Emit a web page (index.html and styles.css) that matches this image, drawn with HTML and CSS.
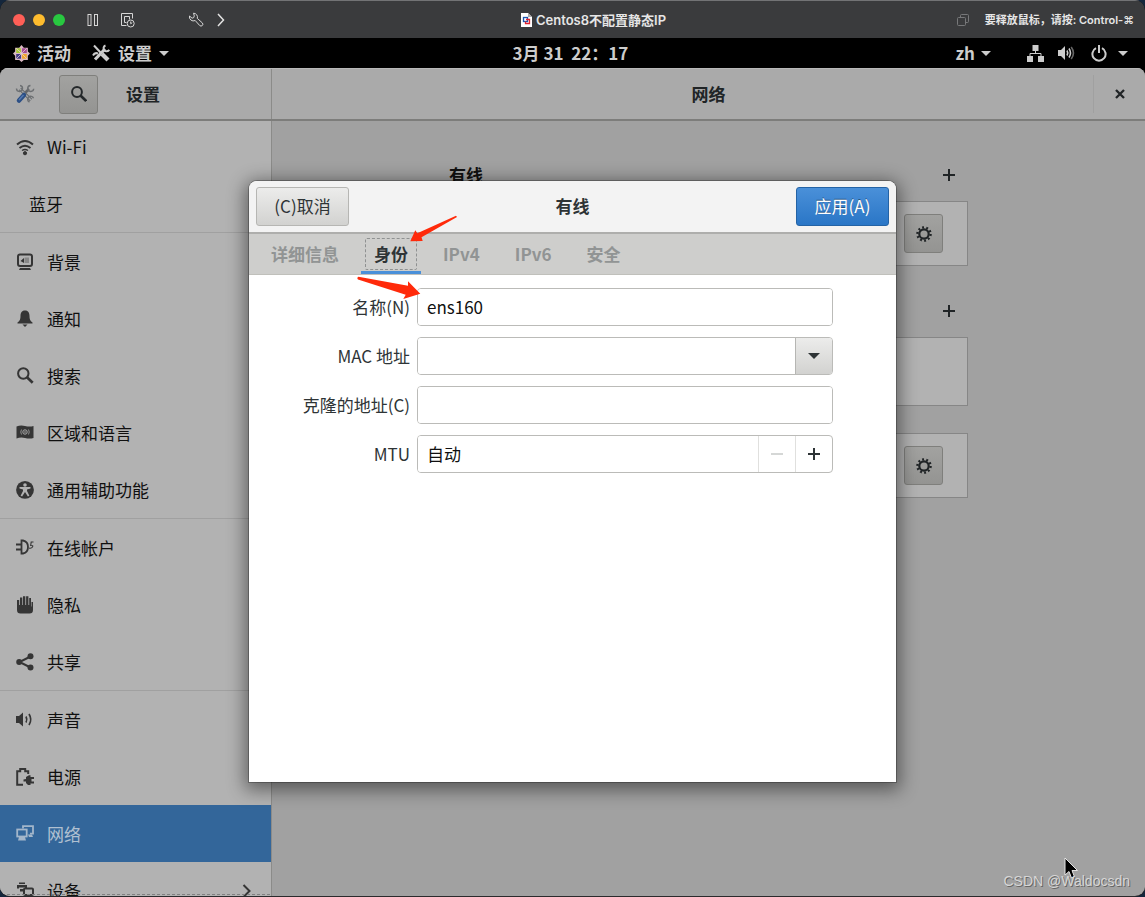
FILE: index.html
```html
<!DOCTYPE html>
<html lang="zh-CN">
<head>
<meta charset="utf-8">
<title>Centos8不配置静态IP</title>
<link rel="stylesheet" href="styles.css">
</head>
<body>
<div class="vm">
  <header class="titlebar">
    <div class="titlebar-left">
      <span class="light light-red"></span>
      <span class="light light-yellow"></span>
      <span class="light light-green"></span>
      <svg class="tb-pause" width="12" height="14" viewBox="0 0 12 14" fill="none" stroke="#d6d6d6"><rect x="1" y="1.500" width="3" height="11"/><rect x="7.500" y="1.500" width="3" height="11"/></svg>
      <svg class="tb-snap" width="16" height="16" viewBox="0 0 16 16" fill="none" stroke="#d6d6d6"><path d="M6.500 13.500h-5v-12h11v5M6.500 10.500h-2v-6h5v3"/><circle cx="10.700" cy="11.500" r="3.500"/><path d="M10.700 9.500v2.200l1.500-1"/></svg>
      <svg class="tb-wrench" width="16" height="16" viewBox="0 0 16 16" fill="none" stroke="#d6d6d6" stroke-linejoin="round"><path d="M5.500 1.200a4 4 0 0 1 3.800 5.200l5 4.500a1.800 1.800 0 0 1-2.600 2.600L7.200 8.500A4 4 0 0 1 1.500 4l2.600 2.200 1.600-.6.600-1.700z"/></svg>
      <svg class="tb-next" width="8" height="14" viewBox="0 0 8 14" fill="none" stroke="#e2e2e2" stroke-width="1.500"><path d="M1 1l5.500 6L1 13"/></svg>
    </div>
    <div class="titlebar-title">
      <svg width="11" height="14" viewBox="0 0 11 14"><path d="M0 0h7l4 4v10H0z" fill="#fff"/><path d="M7 0v4h4z" fill="#aaa"/><rect x="2.500" y="4.500" width="4" height="4" fill="none" stroke="#1d56b0" stroke-width="1.300"/><path d="M5 6.500h3.500v4h-4V8.500" fill="none" stroke="#e3222f" stroke-width="1.300"/></svg>
      <span>Centos8不配置静态IP</span>
    </div>
    <div class="titlebar-right">
      <svg width="12" height="12" viewBox="0 0 12 12" fill="none" stroke="#77787a"><path d="M3.500 3V1.500a1 1 0 0 1 1-1h6a1 1 0 0 1 1 1v6a1 1 0 0 1-1 1H9"/><rect x=".5" y="3.500" width="8" height="8" rx="1"/></svg>
      <span>要释放鼠标，请按: Control-⌘</span>
    </div>
  </header>

  <nav class="topbar">
    <div class="topbar-left">
      <div class="topbar-group">
        <svg width="17" height="17" viewBox="0 0 16 16"><path d="M8 0l2.200 2.500H14V6l2 2-2 2.200V14h-3.800L8 16l-2.200-2H2v-3.800L0 8l2-2V2.500h3.800z" fill="#d9b9c3"/><path d="M3 3h4.500v4.500H3z" fill="#a8c93a"/><path d="M8.500 3H13v4.500H8.500z" fill="#a54c94"/><path d="M3 8.500h4.500V13H3z" fill="#453c86"/><path d="M8.500 8.500H13V13H8.500z" fill="#efa72c"/><path d="M3 3l10 10M13 3L3 13" stroke="#e8d8dc" stroke-width=".7"/></svg>
        <span>活动</span>
      </div>
      <div class="topbar-group topbar-app">
        <svg width="19" height="18" viewBox="0 0 19 18" fill="none" stroke="#ccc"><path d="M2 1.500l7 7.500" stroke-width="2"/><path d="M10 10l6 6" stroke-width="4.200"/><path d="M13 5L3 15.500" stroke-width="3.200"/><path d="M13.500 1.500a3 3 0 1 0 3.700 4.200M6 9.500a4 4 0 0 0-5 2" stroke-width="2"/></svg>
        <span>设置</span>
        <span class="tri"></span>
      </div>
    </div>
    <time class="clock">3月 31&nbsp; 22：17</time>
    <div class="topbar-group topbar-status">
      <span>zh</span><span class="tri"></span>
      <svg class="st-net" width="17" height="17" viewBox="0 0 17 17" fill="#ccc"><path d="M5.500 0h6v6h-6zM0 11h6v6H0zM11 11h6v6h-6z"/><path d="M8.500 6v3M3 11V8.500h11V11" fill="none" stroke="#ccc"/></svg>
      <svg class="st-vol" width="17" height="16" viewBox="0 0 17 16" fill="none" stroke="#ccc" stroke-width="1.600"><path d="M0 5h3l4-4v14l-4-4H0z" fill="#ccc" stroke="none"/><path d="M9 5.500q1.500 2.500 0 5M11 3.500q3 4.500 0 9"/><path d="M13.200 2q4.500 6 0 12" stroke="#666"/></svg>
      <svg class="st-power" width="16" height="17" viewBox="0 0 16 17" fill="none" stroke="#ccc" stroke-width="2"><path d="M5 3.200a6.600 6.600 0 1 0 6 0M8 0v8"/></svg>
      <span class="tri"></span>
    </div>
  </nav>

  <div class="desktop">
    <div class="window">
      <header class="headerbar">
        <div class="hb-side">
          <svg class="hb-tools" width="20" height="20" viewBox="0 0 20 20" fill="none"><path d="M14 5L8 11" stroke="#63666a" stroke-width="2.500"/><path d="M5 5l11 11" stroke="#65686b" stroke-width="3.200"/><path d="M5 5l11 11" stroke="#a4a6a8" stroke-width="1.400"/><path d="M15.500 1.500a3 3 0 1 0 3.200 3.300M1.500 4.500A3 3 0 1 0 5 1.500M14.500 18a3 3 0 1 1 4-3.700" stroke="#6c6f72" stroke-width="1.400"/><path d="M9 11l-5 5.500" stroke="#2c4f85" stroke-width="4.500" stroke-linecap="round"/><path d="M8.500 11l-4.500 5" stroke="#5479b0" stroke-width="1.500"/></svg>
          <button class="btn-dim hb-search" type="button" aria-label="搜索"><svg width="16" height="16" viewBox="0 0 16 16" fill="none" stroke="#24282a" stroke-width="2"><circle cx="6" cy="6" r="4.900"/><path d="M9.500 9.500l5.700 5.500" stroke-width="2.700"/></svg></button>
          <h1 class="hb-title">设置</h1>
        </div>
        <div class="hb-main">
          <h2 class="hb-title">网络</h2>
          <button class="hb-close" type="button" aria-label="关闭"><svg width="10" height="10" viewBox="0 0 10 10" stroke="#202426" stroke-width="2.300"><path d="M1 1l8 8M9 1L1 9"/></svg></button>
        </div>
      </header>

      <div class="panes">
        <aside class="sidebar">
          <ul class="list">
            <li><a class="row" href="#"><svg class="ico" viewBox="0 0 18 18" fill="none" stroke="#353535" stroke-width="2"><path d="M1 6.500q8-7 16 0M3.500 10q5.500-4.500 11 0"/><path d="M6 12.500q3-2 6 0" stroke-width="1.300"/><circle cx="9" cy="15.200" r="1.600" fill="#353535" stroke-width="1"/></svg><span>Wi-Fi</span></a></li>
            <li><a class="row row-noicon" href="#"><span>蓝牙</span></a></li>
            <li class="sep"><a class="row" href="#"><svg class="ico" viewBox="0 0 18 18"><rect x="2" y="1.500" width="14" height="11.500" rx="2" fill="none" stroke="#353535" stroke-width="2"/><path d="M4.500 8L8 5v5zM4 15h10l1 2H3z" fill="#353535"/><path d="M8.500 4.500H13V10H8.500z" fill="#888"/></svg><span>背景</span></a></li>
            <li><a class="row" href="#"><svg class="ico" viewBox="0 0 18 18" fill="#353535"><path d="M9 .5c3.500 0 4.500 2.500 4.500 5.500s.5 5 3 6.500v1h-15v-1c2.500-1.500 3-3.500 3-6.500S5.500.5 9 .5z"/><path d="M6.500 14.500h5L9 17z"/></svg><span>通知</span></a></li>
            <li><a class="row" href="#"><svg class="ico" viewBox="0 0 18 18" fill="none" stroke="#353535" stroke-width="2"><circle cx="7.300" cy="6.500" r="5.200"/><path d="M11 10.200l5.700 5.600" stroke-width="2.600"/></svg><span>搜索</span></a></li>
            <li><a class="row" href="#"><svg class="ico" viewBox="0 0 18 18"><path d="M.5 2.500q4-1.500 8.500-.5t8.500 0v12q-4 1-8.500 0t-8.500.5z" fill="#353535"/><circle cx="9" cy="8" r="2.200" fill="none" stroke="#aaa"/><circle cx="9" cy="8" r=".8" fill="#aaa"/><path d="M5.500 5.500q-1.500 2.500 0 5M12.500 5.500q1.500 2.500 0 5" fill="none" stroke="#999" stroke-width=".9"/></svg><span>区域和语言</span></a></li>
            <li><a class="row" href="#"><svg class="ico" viewBox="0 0 18 18"><circle cx="9" cy="8.900" r="8.900" fill="#353535"/><circle cx="9" cy="4" r="1.800" fill="#b2b2b2"/><path d="M3.500 6h11v1.400L11 8.500V10l2.400 4.700-1.500.7L9 10.900l-2.900 4.500-1.500-.7L7 10V8.500L3.500 7.400z" fill="#b2b2b2"/></svg><span>通用辅助功能</span></a></li>
            <li class="sep"><a class="row" href="#"><svg class="ico" viewBox="0 0 18 18" fill="none" stroke="#353535" stroke-width="1.800"><path d="M5.500 1.500H7q5 1 5 6.500t-5 6.500H5.500zM0 5.500h5M0 10.500h5"/><path d="M17.500 3h-2.300l-.5 3.500q3-.2 1.800 1.500T13 9" stroke-width="1.100"/></svg><span>在线帐户</span></a></li>
            <li><a class="row" href="#"><svg class="ico" viewBox="0 0 18 18" fill="#353535"><path d="M1 4h2.200v5H4V1.500h2.300V9H7V.2h2.300V9h.8V.2h2.300V9h.8V2h1.800v8.500h.5V6H17v8q0 3.500-3.500 3.500h-9Q1 17.500 1 14z"/></svg><span>隐私</span></a></li>
            <li><a class="row" href="#"><svg class="ico" viewBox="0 0 18 18" fill="#353535"><path d="M14.500 3.500L3.500 9l11 5.500" fill="none" stroke="#353535" stroke-width="2"/><circle cx="14.500" cy="3.200" r="3"/><circle cx="3.200" cy="9" r="3"/><circle cx="14.500" cy="14.600" r="3"/></svg><span>共享</span></a></li>
            <li class="sep"><a class="row" href="#"><svg class="ico" viewBox="0 0 18 18" fill="none" stroke="#353535" stroke-width="1.700"><path d="M0 5h3l4-3.500v14L3 12H0z" fill="#353535" stroke="none"/><path d="M10 5.500q1.600 3 0 6M13 3q3.500 5.500 0 11"/></svg><span>声音</span></a></li>
            <li><a class="row" href="#"><svg class="ico" viewBox="0 0 18 18"><path d="M7 16.800H1.200V3.200h3V1h5v2.200h3V6" fill="none" stroke="#353535" stroke-width="2"/><path d="M7.500 11.500L10 11V9l3-1.800h1.500V9H18v2h-2.500v2.500H18v2h-3.500V17H12l-2-2v-1.500H7.500z" fill="#353535"/></svg><span>电源</span></a></li>
            <li><a class="row row-active" href="#" aria-current="page"><svg class="ico" viewBox="0 0 18 18" fill="none" stroke="#a3b6ca" stroke-width="1.800"><path d="M7 3.500V1.200h10v7.500h-3"/><rect x="1.200" y="4.500" width="9.500" height="7"/><path d="M3 12h6l1 3.500H2zM12 9.500h4l1 2.500h-4z" fill="#a3b6ca" stroke="none"/></svg><span>网络</span></a></li>
            <li><a class="row" href="#"><svg class="ico" viewBox="0 0 18 18" fill="#353535"><path d="M3 .5h6V2H3zM1 3h10v3.500H9V5.500H3v1H1zM4 7h4v2.500H4z"/><rect x="8" y="6.500" width="9" height="6.500" rx="1" fill="none" stroke="#353535" stroke-width="2"/></svg><span>设备</span><svg class="chev" width="9" height="14" viewBox="0 0 9 14" fill="none" stroke="#353535" stroke-width="2"><path d="M1.500 1l6 6-6 6"/></svg></a></li>
          </ul>
        </aside>

        <main class="content">
          <div class="sections">
            <div class="sec-head"><h3>有线</h3><button class="plain" type="button" aria-label="添加"><svg width="12" height="12" viewBox="0 0 12 12" stroke="#202426" stroke-width="2"><path d="M6 0v12M0 6h12"/></svg></button></div>
            <div class="card"><button class="btn-dim" type="button" aria-label="选项"><svg width="16" height="16" viewBox="0 0 16 16" fill="none" stroke="#202426"><circle cx="8" cy="8" r="4.700" stroke-width="2.200"/><circle cx="8" cy="8" r="6.600" stroke-width="2.400" stroke-dasharray="1.900 2.247"/></svg></button></div>
            <div class="sec-head sec-next"><button class="plain" type="button" aria-label="添加"><svg width="12" height="12" viewBox="0 0 12 12" stroke="#202426" stroke-width="2"><path d="M6 0v12M0 6h12"/></svg></button></div>
            <div class="card card-empty"></div>
            <div class="card card-proxy"><button class="btn-dim" type="button" aria-label="选项"><svg width="16" height="16" viewBox="0 0 16 16" fill="none" stroke="#202426"><circle cx="8" cy="8" r="4.700" stroke-width="2.200"/><circle cx="8" cy="8" r="6.600" stroke-width="2.400" stroke-dasharray="1.900 2.247"/></svg></button></div>
          </div>
        </main>
      </div>
    </div>

    <div class="overlay">
      <form class="dialog" role="dialog" aria-labelledby="dlg-title">
        <div class="dlg-head">
          <button class="btn" type="button">(C)取消</button>
          <h2 id="dlg-title">有线</h2>
          <button class="btn btn-primary" type="button">应用(A)</button>
        </div>
        <div class="tabs" role="tablist">
          <button class="tab" type="button" role="tab">详细信息</button>
          <button class="tab tab-on" type="button" role="tab" aria-selected="true"><span>身份</span></button>
          <button class="tab" type="button" role="tab">IPv4</button>
          <button class="tab" type="button" role="tab">IPv6</button>
          <button class="tab" type="button" role="tab">安全</button>
        </div>
        <div class="fields">
          <label for="f-name">名称(N)</label>
          <div class="field"><input id="f-name" type="text" value="ens160"></div>
          <label for="f-mac">MAC 地址</label>
          <div class="field"><input id="f-mac" type="text"><button class="drop" type="button" aria-label="展开"><span class="tri tri-dark"></span></button></div>
          <label for="f-clone">克隆的地址(C)</label>
          <div class="field"><input id="f-clone" type="text"></div>
          <label for="f-mtu">MTU</label>
          <div class="field"><input id="f-mtu" type="text" value="自动"><button class="step" type="button" aria-label="减少" disabled><svg width="12" height="12" viewBox="0 0 12 12" stroke="#d5d7d6" stroke-width="2"><path d="M0 6h12"/></svg></button><button class="step" type="button" aria-label="增加"><svg width="12" height="12" viewBox="0 0 12 12" stroke="#2e3436" stroke-width="2"><path d="M6 0v12M0 6h12"/></svg></button></div>
        </div>
        <svg class="arrows" width="104" height="86" viewBox="355 215 104 86" fill="#ff2a0a"><path d="M456 215.800l1 1.200-35.500 20.300 1.200 3.700-12.400.2 5-11 2 3.100z"/><path d="M358.500 276.700l49.500 9v-4.500l12.300 12.600-17 5.200 2.400-4.300-47.700-15.200q-1.500-1.800.5-2.800z"/></svg>
      </form>
    </div>

    <div class="edge"></div>
    <svg class="cursor" width="16" height="24" viewBox="0 0 16 24"><path d="M1 1v17l4-3.500L7.500 21l3-1.200L8 13.500h5.500z" fill="#000" stroke="#e4e4e4"/></svg>
    <span class="watermark">CSDN @Waldocsdn</span>
  </div>
</div>
</body>
</html>
```
FILE: styles.css
```css
* {
  box-sizing: border-box;
}

body {
  margin: 0;
  background: #14263c;
  color: #101010;
  font: 17px/24px "Noto Sans CJK SC", "Noto Sans", sans-serif;
}

h1, h2, h3 {
  margin: 0;
  font-size: 17px;
  line-height: 24px;
  font-weight: 700;
}

button, input {
  font: inherit;
  color: inherit;
}

button {
  display: flex;
  align-items: center;
  justify-content: center;
  padding: 0;
  border: 0;
  background: none;
}

svg {
  display: block;
  flex: none;
}

.vm {
  display: flex;
  flex-direction: column;
  height: 100vh;
  overflow: hidden;
  border-bottom: 1px solid #2a2a2c;
  border-radius: 10px;
  background: #000;
}

/* Host window title bar */
.titlebar {
  display: grid;
  grid-template-columns: 1fr auto 1fr;
  align-items: center;
  flex: none;
  height: 38px;
  padding: 0 11px 0 13px;
  border-top: 1px solid #727375;
  background: #3a3b3d;
  color: #e6e6e6;
  font: 600 13px/18px Inter, "Noto Sans CJK SC", sans-serif;
}

.titlebar-left,
.titlebar-title,
.titlebar-right {
  display: flex;
  align-items: center;
}

.titlebar-title {
  gap: 4px;
  padding-left: 40px;
}

.titlebar-right {
  justify-content: flex-end;
  gap: 16px;
  font-size: 11px;
}

.light {
  width: 12px;
  height: 12px;
  margin-right: 8px;
  border-radius: 50%;
}

.light-red { background: #ff5f57; }
.light-yellow { background: #febc2e; }
.light-green { background: #28c840; }
.tb-pause { margin-left: 14px; }
.tb-snap { margin-left: 21px; }
.tb-wrench { margin-left: 52px; }
.tb-next { margin-left: 13px; }

/* GNOME top bar */
.topbar {
  display: grid;
  grid-template-columns: 1fr auto 1fr;
  align-items: center;
  flex: none;
  height: 30px;
  padding: 0 17px 0 13px;
  background: #000;
  color: #ccc;
  font-weight: 700;
}

.topbar-left,
.topbar-group {
  display: flex;
  align-items: center;
}

.topbar-group {
  gap: 7px;
}

.topbar-app {
  margin-left: 21px;
}

.topbar-status {
  justify-content: flex-end;
  gap: 0;
}

.topbar-status .tri { margin-left: 6px; }
.st-net { margin-left: 36px; }
.st-vol { margin-left: 14px; }
.st-power { margin: 0 5px 0 16px; }

.tri {
  border: 5px solid transparent;
  border-top-color: #ccc;
  border-bottom: 0;
}

.tri-dark {
  border-width: 6px;
  border-top-color: #2e3436;
  border-bottom: 0;
}

/* Settings window */
.desktop {
  position: relative;
  flex: 1;
  min-height: 0;
}

.window {
  display: flex;
  flex-direction: column;
  height: 100%;
  overflow: hidden;
  border-radius: 8px 8px 0 0;
  background: #a1a1a1;
}

.headerbar {
  display: flex;
  flex: none;
  position: relative;
  z-index: 1;
  height: 53px;
  border-top: 1px solid #b8b8b8;
  border-bottom: 2px solid #7d7d7b;
  background: #aaa;
  color: #202426;
}

.hb-side {
  display: flex;
  align-items: center;
  width: 272px;
  padding-left: 15px;
  border-right: 1px solid #8b8b89;
}

.hb-search {
  margin: 0 28px 0 24px;
}

.hb-main {
  display: grid;
  grid-template-columns: 1fr auto 1fr;
  align-items: center;
  flex: 1;
}

.hb-main .hb-title {
  grid-column: 2;
}

.hb-close {
  justify-self: end;
  width: 52px;
  height: 38px;
  border-left: 1px solid #a0a0a0;
}

.btn-dim {
  width: 39px;
  height: 39px;
  border: 1px solid #7f7f7c;
  border-radius: 3px;
  background: linear-gradient(#a2a2a0, #949492);
}

.panes {
  display: flex;
  flex: 1;
  min-height: 0;
}

.sidebar {
  width: 272px;
  overflow: hidden;
  border-right: 1px solid #8b8b89;
  background: #b2b2b2;
}

.list {
  margin: -3px 0 0;
  padding: 0;
  list-style: none;
}

.sep {
  border-top: 1px solid #a0a0a0;
}

.row {
  display: flex;
  align-items: center;
  gap: 13px;
  height: 57px;
  padding: 0 20px 0 16px;
  color: #101010;
  text-decoration: none;
}

.row-noicon {
  padding-left: 29px;
}

.row-active {
  background: #33669a;
  color: #b0c0d1;
}

.ico {
  width: 18px;
  height: 18px;
}

.chev {
  margin-left: auto;
}

.content {
  flex: 1;
  padding-top: 35px;
}

.sections {
  width: 60%;
  max-width: 519px;
  margin: 0 auto;
}

.sec-head {
  display: flex;
  align-items: center;
  height: 38px;
  margin-bottom: 7px;
}

.sec-next {
  margin-top: 26px;
}

.plain {
  width: 38px;
  height: 38px;
  margin-left: auto;
}

.card {
  display: flex;
  align-items: center;
  justify-content: flex-end;
  height: 65px;
  padding-right: 24px;
  border: 1px solid #868686;
  background: #b2b2b2;
}

.card-empty {
  height: 69px;
}

.card-proxy {
  margin-top: 27px;
}

/* Connection editor */
.overlay {
  position: absolute;
  inset: 0;
  display: flex;
  align-items: center;
  justify-content: center;
  padding-bottom: 2px;
}

.dialog {
  position: relative;
  width: 647px;
  min-height: 601px;
  border-radius: 8px 8px 0 0;
  background: #fff;
  box-shadow: 0 0 0 1px rgba(0, 0, 0, .25), 0 4px 18px 4px rgba(0, 0, 0, .45);
  color: #2e3436;
}

.dlg-head {
  display: flex;
  align-items: center;
  justify-content: space-between;
  padding: 6px 7px;
  border-bottom: 2px solid #aeaeac;
  border-radius: 8px 8px 0 0;
  background: #f3f3f3;
}

.btn {
  width: 93px;
  height: 39px;
  border: 1px solid #b6b6b3;
  border-radius: 3px;
  background: linear-gradient(#ececeb, #d2d2d0);
}

.btn-primary {
  border-color: #2463a5;
  background: linear-gradient(#4a90d9, #2a76c6);
  color: #fff;
  text-shadow: 0 -1px rgba(0, 0, 0, .4);
}

.tabs {
  display: flex;
  gap: 9px;
  height: 41px;
  padding-left: 9px;
  border-bottom: 1px solid #c0c0bb;
  background: #cececc;
}

.tab {
  padding: 0 13px;
  color: #919494;
  font-weight: 700;
}

.tab-on {
  padding: 3px 4px 0;
  border-bottom: 3px solid #4a90d9;
  color: #2e3436;
}

.tab-on span {
  padding: 3px 8px;
  border: 1px dashed #8f9191;
  border-radius: 2px;
}

.fields {
  display: grid;
  grid-template-columns: 161px 1fr;
  gap: 11px 7px;
  align-items: center;
  padding: 13px 63px 0 0;
}

.fields label {
  text-align: right;
}

.field {
  display: flex;
  height: 38px;
  overflow: hidden;
  border: 1px solid #bbbbb8;
  border-radius: 4px;
}

.field input {
  flex: 1;
  min-width: 0;
  padding: 0 9px;
  border: 0;
  outline: 0;
  background: #fff;
  color: #101010;
}

.drop {
  width: 37px;
  border-left: 1px solid #b6b6b3;
  background: linear-gradient(#ececeb, #d2d2d0);
}

.step {
  width: 37px;
  border-left: 1px solid #e0e0de;
}

.arrows {
  position: absolute;
  left: 106px;
  top: 34px;
  pointer-events: none;
}

.edge {
  position: absolute;
  left: 7px;
  bottom: 1px;
  width: 263px;
  border-top: 1px dashed #808080;
}

.cursor {
  position: absolute;
  right: 65px;
  bottom: 15px;
}

.watermark {
  position: absolute;
  right: 15px;
  bottom: 6px;
  color: #d6d6d6;
  font: 14px/18px "Liberation Sans", Arial, sans-serif;
  text-shadow: 1px 1px #666;
}
```
